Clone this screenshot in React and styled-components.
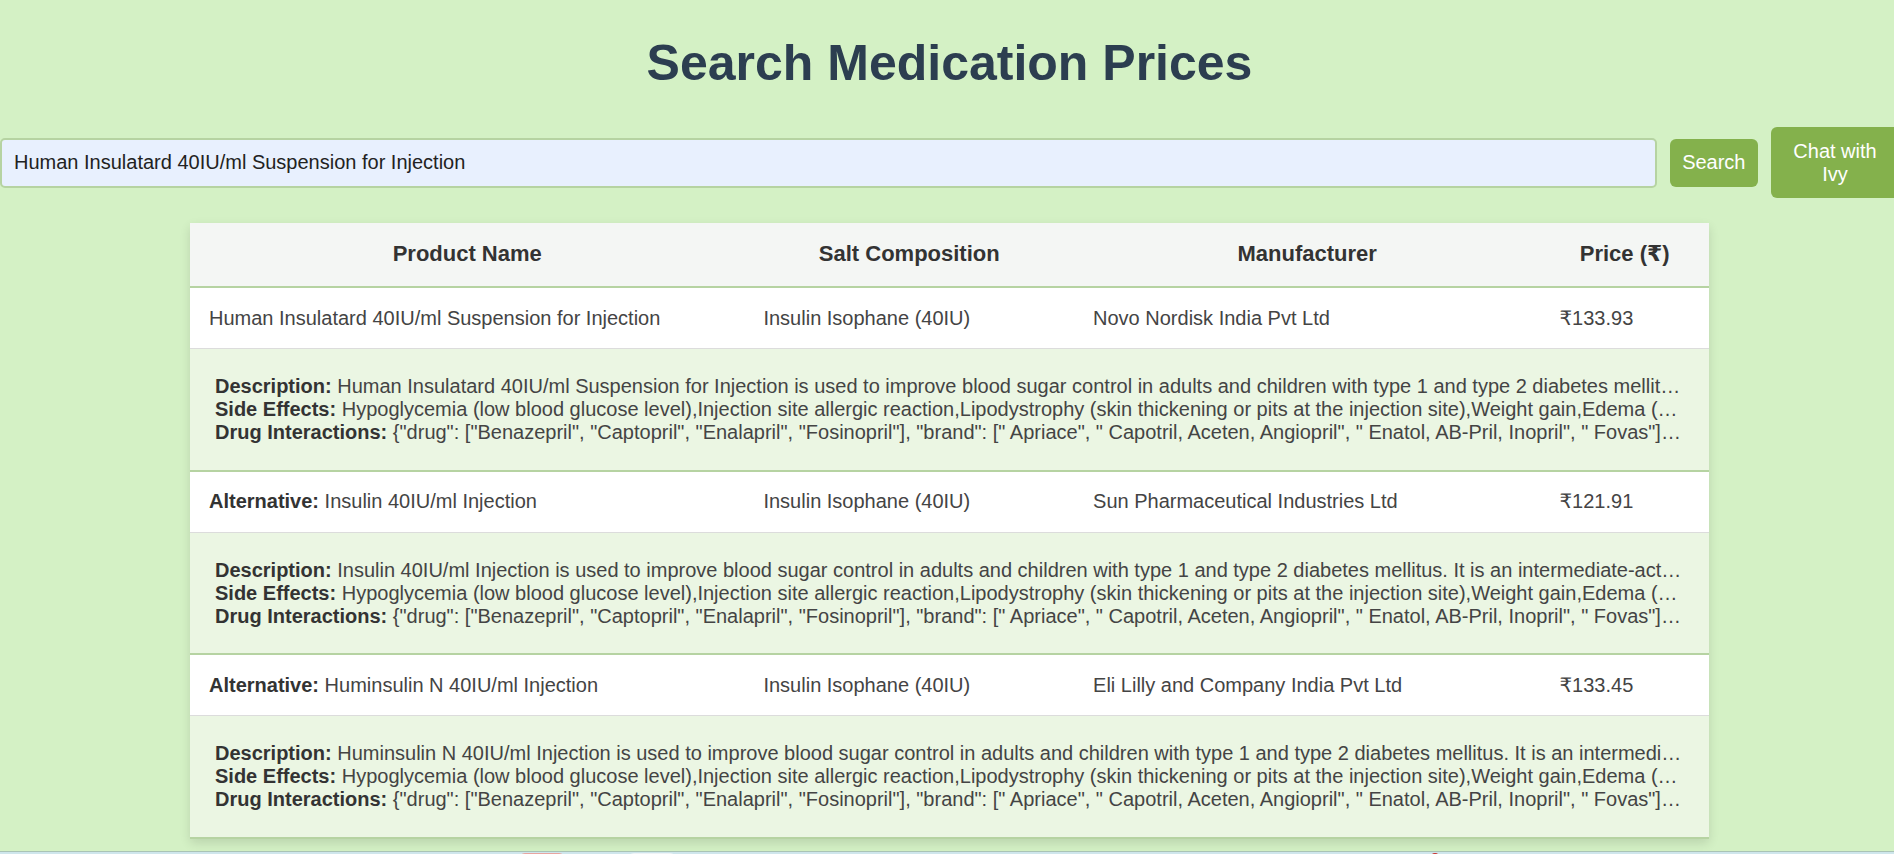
import React from 'react'
import styled, {createGlobalStyle} from 'styled-components'

const GlobalStyle = createGlobalStyle`
    html, body {
        margin: 0;
        padding: 0;
        background: #d4f1c5;
        overflow-x: hidden;
    }
    body {
        font-family: "Liberation Sans", Arial, "DejaVu Sans", sans-serif;
        color: #333;
    }
`;

const medicines = [
    {
        alternative: false,
        name: 'Human Insulatard 40IU/ml Suspension for Injection',
        salt: 'Insulin Isophane (40IU)',
        maker: 'Novo Nordisk India Pvt Ltd',
        price: '₹133.93',
        description: 'Human Insulatard 40IU/ml Suspension for Injection is used to improve blood sugar control in adults and children with type 1 and type 2 diabetes mellitus. It is an intermediate-acting insulin which starts working within 1.5 hours of injecting.',
    },
    {
        alternative: true,
        name: 'Insulin 40IU/ml Injection',
        salt: 'Insulin Isophane (40IU)',
        maker: 'Sun Pharmaceutical Industries Ltd',
        price: '₹121.91',
        description: 'Insulin 40IU/ml Injection is used to improve blood sugar control in adults and children with type 1 and type 2 diabetes mellitus. It is an intermediate-acting insulin which starts working within 1.5 hours of injecting.',
    },
    {
        alternative: true,
        name: 'Huminsulin N 40IU/ml Injection',
        salt: 'Insulin Isophane (40IU)',
        maker: 'Eli Lilly and Company India Pvt Ltd',
        price: '₹133.45',
        description: 'Huminsulin N 40IU/ml Injection is used to improve blood sugar control in adults and children with type 1 and type 2 diabetes mellitus. It is an intermediate-acting insulin which starts working within 1.5 hours of injecting.',
    },
]

const sideEffects = 'Hypoglycemia (low blood glucose level),Injection site allergic reaction,Lipodystrophy (skin thickening or pits at the injection site),Weight gain,Edema (swelling)'
const interactions = '{"drug": ["Benazepril", "Captopril", "Enalapril", "Fosinopril"], "brand": [" Apriace", " Capotril, Aceten, Angiopril", " Enatol, AB-Pril, Inopril", " Fovas"], "effect": ["MODERATE", "MODERATE"]}'

const App = () => {
    return (
        <>
            <GlobalStyle/>
            <Page>
                <Title>Search Medication Prices</Title>
                <SearchBar>
                    <SearchInput defaultValue="Human Insulatard 40IU/ml Suspension for Injection"/>
                    <ActionButton>Search</ActionButton>
                    <ActionButton wide>Chat with Ivy</ActionButton>
                </SearchBar>

                <ResultsTable>
                    <colgroup>
                        <col style={{width: '36.5%'}}/>
                        <col style={{width: '21.7%'}}/>
                        <col style={{width: '30.7%'}}/>
                        <col style={{width: '11.1%'}}/>
                    </colgroup>
                    <thead>
                        <tr>
                            <HeadCell>Product Name</HeadCell>
                            <HeadCell>Salt Composition</HeadCell>
                            <HeadCell>Manufacturer</HeadCell>
                            <HeadCell>Price (₹)</HeadCell>
                        </tr>
                    </thead>
                    <tbody>
                        {medicines.map((med, i) => (
                            <React.Fragment key={i}>
                                <DataRow>
                                    <Cell>{med.alternative && <b>Alternative: </b>}{med.name}</Cell>
                                    <Cell>{med.salt}</Cell>
                                    <Cell>{med.maker}</Cell>
                                    <Cell>{med.price}</Cell>
                                </DataRow>
                                <DetailRow>
                                    <DetailCell colSpan={4}>
                                        <Details>
                                            <Line><b>Description:</b> {med.description}</Line>
                                            <Line><b>Side Effects:</b> {sideEffects}</Line>
                                            <Line><b>Drug Interactions:</b> {interactions}</Line>
                                        </Details>
                                    </DetailCell>
                                </DetailRow>
                            </React.Fragment>
                        ))}
                    </tbody>
                </ResultsTable>
            </Page>
            <BottomStrip>
                <Peek color="#e8a5a0" width={46} offset={519}/>
                <Peek color="#eef3f6" width={48} offset={63}/>
                <Peek color="#c9302c" width={8} offset={755}/>
            </BottomStrip>
        </>
    )
}

const Page = styled.div`
    width: calc(100% + 5px);
    padding-bottom: 12px;
`;

const Title = styled.h1`
    margin: 34px 0 35px;
    text-align: center;
    font-size: 50px;
    font-weight: 700;
    color: #2c3e50;
`;

const SearchBar = styled.div`
    display: flex;
    align-items: center;
    gap: 13px;
`;

const SearchInput = styled.input`
    flex: 1;
    box-sizing: border-box;
    height: 50px;
    padding: 0 12px;
    border: 2px solid #b6d3a2;
    border-radius: 5px;
    background: #e8f0fe;
    font-family: inherit;
    font-size: 20px;
    color: #222;
    outline: none;
`;

const ActionButton = styled.button`
    box-sizing: border-box;
    width: ${props => props.wide ? '128px' : 'auto'};
    padding: 12.5px ${props => props.wide ? '18px' : '12.5px'};
    border: none;
    border-radius: 6px;
    background: #84b14c;
    color: #fff;
    font-family: inherit;
    font-size: 20px;
    line-height: 23px;
    text-align: center;
    cursor: pointer;
`;

const ResultsTable = styled.table`
    width: 1519px;
    margin: 25px auto 0;
    border-collapse: collapse;
    table-layout: fixed;
    background: #fff;
    box-shadow: 0 4px 10px rgba(0, 0, 0, 0.12);
`;

const HeadCell = styled.th`
    padding: 18px 19px 19px;
    background: #f4f6f4;
    border-bottom: 2px solid #b6d3a2;
    font-size: 22px;
    font-weight: 700;
    color: #333;
    text-align: center;
`;

const DataRow = styled.tr`
    background: #fff;
    border-bottom: 1px solid #dcdcdc;
`;

const Cell = styled.td`
    padding: 18.5px 19px;
    font-size: 20px;
    line-height: 23px;
    color: #444;
    text-align: left;
    white-space: nowrap;
    overflow: hidden;

    b {
        color: #333;
    }
`;

const DetailRow = styled.tr`
    background: #ebf6e3;
    border-bottom: 2px solid #b6d3a2;
`;

const DetailCell = styled.td`
    padding: 26px 27px 25.5px 25px;
`;

const Details = styled.div`
    font-size: 20px;
    line-height: 23px;
    color: #444;

    b {
        color: #333;
    }
`;

const Line = styled.div`
    white-space: nowrap;
    overflow: hidden;
    text-overflow: ellipsis;
`;

const BottomStrip = styled.div`
    display: flex;
    align-items: flex-start;
    height: 9px;
    border-top: 1px solid #a9c3b6;
    background: #cfe6ec;
    overflow: hidden;
`;

const Peek = styled.span`
    flex: none;
    width: ${props => props.width}px;
    height: 14px;
    margin-top: 1px;
    margin-left: ${props => props.offset}px;
    border-radius: 6px 6px 0 0;
    background: ${props => props.color};
`;

export default App
